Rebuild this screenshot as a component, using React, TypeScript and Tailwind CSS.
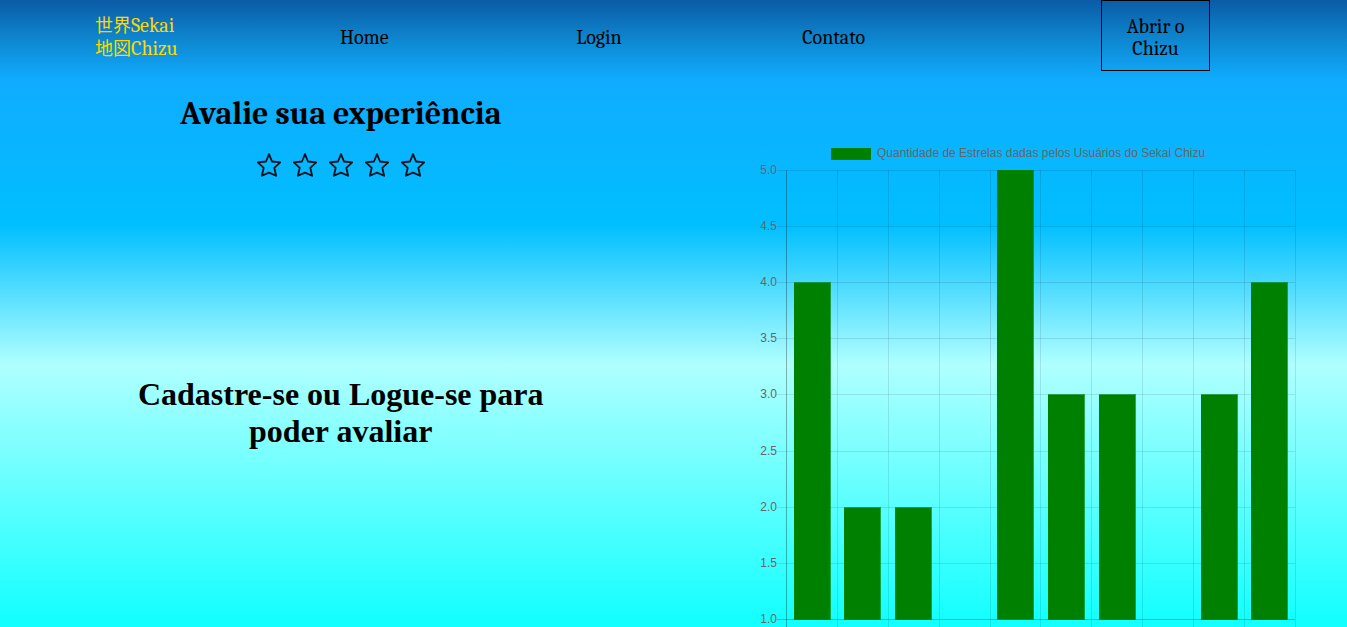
const ratings: (number | null)[] = [4, 2, 2, null, 5, 3, 3, null, 3, 4];
const ticks = ["5.0", "4.5", "4.0", "3.5", "3.0", "2.5", "2.0", "1.5", "1.0"];

const LEFT = 35;
const TOP = 30;
const STEP_X = 50.88;
const STEP_Y = 56.1;
const RIGHT = 544;
const BASE = 479;

function Star({ value }: { value: number }) {
  return (
    <button type="button" aria-label={`${value} estrelas`} className="size-6">
      <svg viewBox="0 0 24 24" className="size-6" fill="none" stroke="#06121c" strokeWidth="1.8" strokeLinejoin="round">
        <path d="M12 1.2 15 8.5 23.2 9.4 17.3 14.8 19.1 22.8 12 19.6 4.9 22.8 6.7 14.8 0.8 9.4 9 8.5Z" />
      </svg>
    </button>
  );
}

function RatingsChart() {
  return (
    <svg
      width="556"
      height="500"
      role="img"
      aria-label="Quantidade de Estrelas dadas pelos Usuários do Sekai Chizu"
      className="shrink-0 font-['Liberation_Sans',Arial,sans-serif] text-xs"
    >
      <rect x="80" y="8" width="40" height="12" fill="#008000" />
      <text x="126" y="17" fill="#666666">
        Quantidade de Estrelas dadas pelos Usuários do Sekai Chizu
      </text>
      <g shapeRendering="crispEdges">
        {ticks.map((tick, i) => (
          <rect
            key={tick}
            x={LEFT - 9}
            y={Math.round(TOP + i * STEP_Y)}
            width={RIGHT - LEFT + 9}
            height="1"
            fill={i === 8 ? "rgba(0,0,0,0.25)" : "rgba(0,0,0,0.1)"}
          />
        ))}
        {Array.from({ length: 11 }, (_, i) => (
          <rect
            key={i}
            x={Math.round(LEFT + i * STEP_X)}
            y={TOP}
            width="1"
            height={BASE - TOP + 10}
            fill={i === 0 ? "rgba(0,0,0,0.3)" : "rgba(0,0,0,0.1)"}
          />
        ))}
        {ratings.map((rating, i) => {
          if (rating === null) return null;
          const x = Math.round(LEFT + 7.5 + i * STEP_X);
          const y = Math.round(TOP + (5 - rating) * 2 * STEP_Y);
          return (
            <g key={i}>
              <rect x={x} y={y} width="37" height={BASE - y + 1} fill="#008000" fillOpacity="0.7" />
              <rect x={x} y={rating === 5 ? y : y + 1} width="36" height={BASE - y} fill="#008000" />
            </g>
          );
        })}
      </g>
      {ticks.map((tick, i) => (
        <text key={tick} x="26" y={Math.round(TOP + 4 + i * STEP_Y)} textAnchor="end" fill="#666666">
          {tick}
        </text>
      ))}
    </svg>
  );
}

export default function App() {
  return (
    <div className="h-screen overflow-hidden bg-[linear-gradient(#0b5ba5_0px,#0e87d0_40px,#10acff_80px,#00bfff_225px,#b0ffff_365px,#14ffff_620px)] font-['Cambria','Noto_Serif','Liberation_Serif','Noto_Sans_CJK_JP',serif] text-black">
      <header className="h-[72px] pr-[137px] pl-[95px] text-[20px] leading-[22px]">
        <nav className="flex h-[71px] items-stretch">
          <a href="#inicio" className="flex w-[152px] flex-col justify-center pt-1 text-[#ffd700]">
            <span>
              <span className="text-[18px]">世界</span>Sekai
            </span>
            <span>
              <span className="text-[18px]">地図</span>Chizu
            </span>
          </a>
          <div className="grid flex-1 grid-cols-3 items-center justify-items-center pt-1">
            <a href="#home">Home</a>
            <a href="#login">Login</a>
            <a href="#contato">Contato</a>
          </div>
          <div className="flex w-[259px] justify-end">
            <button type="button" className="w-[109px] border border-black px-5 pt-1">
              Abrir o Chizu
            </button>
          </div>
        </nav>
      </header>
      <main className="grid grid-cols-2">
        <section className="flex flex-col items-center pt-6 pl-2 text-center">
          <h1 className="text-[32px] leading-9 font-bold">Avalie sua experiência</h1>
          <div className="mt-[21px] flex gap-3">
            {[1, 2, 3, 4, 5].map((value) => (
              <Star key={value} value={value} />
            ))}
          </div>
          <h2 className="mt-[199px] max-w-[420px] font-['Liberation_Serif',serif] text-[32px] leading-[37px] font-bold">
            Cadastre-se ou Logue-se para poder avaliar
          </h2>
        </section>
        <section className="flex justify-end pt-[68px] pr-10">
          <RatingsChart />
        </section>
      </main>
    </div>
  );
}
